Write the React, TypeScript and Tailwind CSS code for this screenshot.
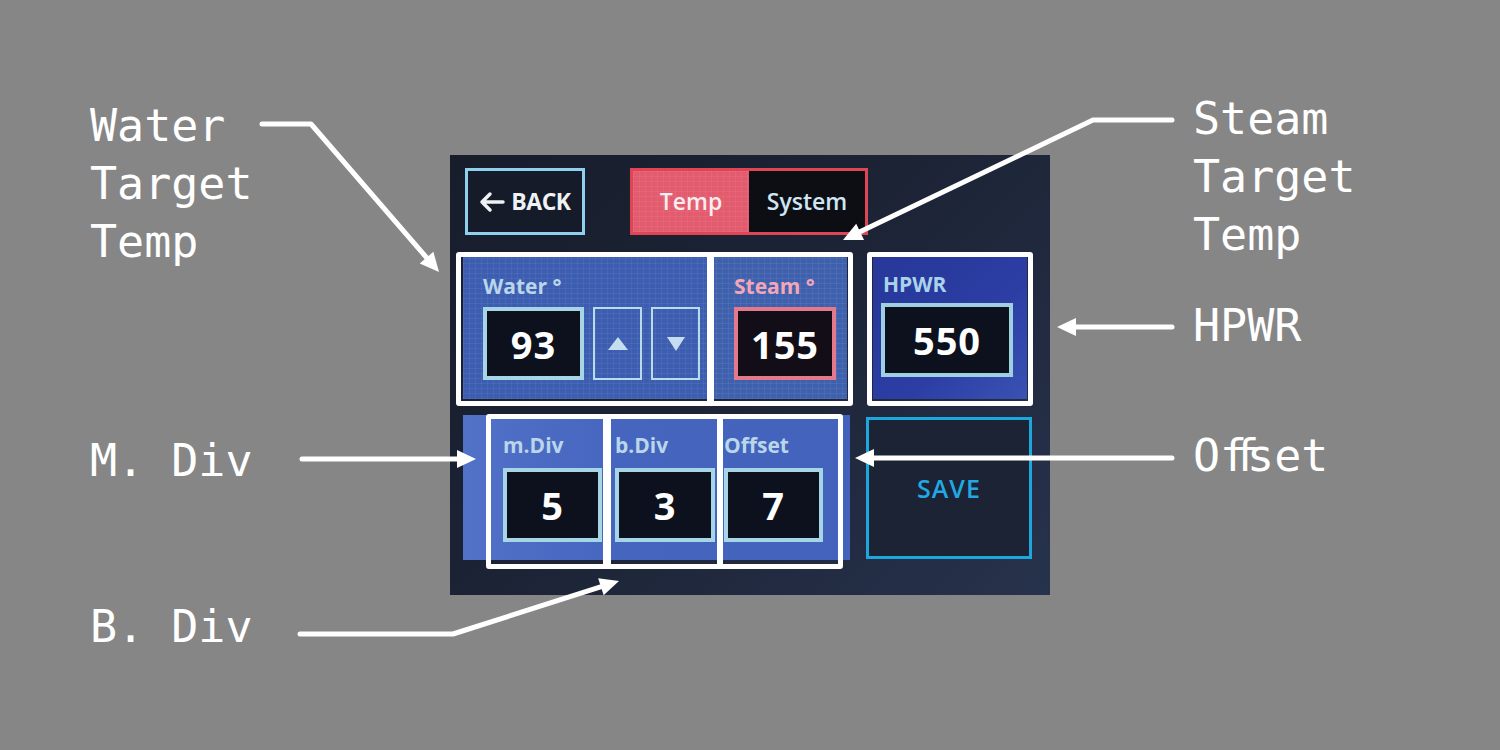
import React from "react";

type Pt = [number, number];

function Callout({ points }: { points: Pt[] }) {
  const n = points.length;
  const [tx, ty] = points[n - 1];
  const [px, py] = points[n - 2];
  const dx = tx - px;
  const dy = ty - py;
  const len = Math.hypot(dx, dy);
  const ux = dx / len;
  const uy = dy / len;
  const L = 19;
  const W = 9;
  const bx = tx - ux * L;
  const by = ty - uy * L;
  const lx = bx - uy * W;
  const ly = by + ux * W;
  const rx = bx + uy * W;
  const ry = by - ux * W;
  const linePts: Pt[] = [...points.slice(0, n - 1), [bx + ux * 3, by + uy * 3]];
  return (
    <g>
      <polyline
        points={linePts.map((p) => p.join(",")).join(" ")}
        fill="none"
        stroke="#ffffff"
        strokeWidth={5}
        strokeLinecap="round"
        strokeLinejoin="round"
      />
      <polygon points={`${tx},${ty} ${lx},${ly} ${rx},${ry}`} fill="#ffffff" />
    </g>
  );
}

function ValueBox({ value, className }: { value: string; className: string }) {
  return (
    <div
      className={`flex items-center justify-center bg-[#0d111d] text-white font-bold text-[38px] leading-none tracking-[1px] ${className}`}
    >
      {value}
    </div>
  );
}

function Label({ text, color }: { text: string; color: string }) {
  return <div className={`text-[21px] leading-[21px] font-bold ${color}`}>{text}</div>;
}

const grid =
  "bg-[repeating-linear-gradient(0deg,rgba(255,255,255,0.06)_0px,rgba(255,255,255,0.06)_1px,transparent_1px,transparent_5px),repeating-linear-gradient(90deg,rgba(255,255,255,0.05)_0px,rgba(255,255,255,0.05)_1px,transparent_1px,transparent_6px)]";

function Screen() {
  return (
    <div className="relative w-[600px] h-[440px] pt-[13px] pl-[13px] bg-[linear-gradient(135deg,#171d2b_0%,#1c2335_45%,#27324c_100%)] font-['Open_Sans',sans-serif]">
      {/* top bar */}
      <div className="flex items-start">
        <div className="ml-[2px] w-[120px] h-[67px] border-[3px] border-[#8fd0ee] bg-[#151b28] flex items-center justify-center gap-[6px]">
          <svg width="26" height="22" viewBox="0 0 26 22">
            <path
              d="M24 11H3M11 3L3 11l8 8"
              fill="none"
              stroke="#eef2f4"
              strokeWidth={3.5}
              strokeLinecap="round"
              strokeLinejoin="round"
            />
          </svg>
          <span className="text-[23px] font-bold text-[#eef2f4] tracking-[-0.5px] leading-none">BACK</span>
        </div>
        <div className="ml-[45px] w-[238px] h-[67px] border-[3px] border-[#e04555] flex">
          <div className={`w-[116px] h-full bg-[#e35b6e] ${grid} flex items-center justify-center`}>
            <span className="text-[23px] font-semibold text-[#f8ecef] leading-none">Temp</span>
          </div>
          <div className="flex-1 h-full bg-[#0d0e14] flex items-center justify-center">
            <span className="text-[23px] font-semibold text-[#cfe6f5] leading-none">System</span>
          </div>
        </div>
      </div>

      {/* row 2 */}
      <div className="mt-[22px] flex items-start">
        <div className="flex h-[142px]">
          <div className={`w-[247px] h-full bg-[#3c5db0] ${grid} pl-[20px] pt-[19px]`}>
            <Label text="Water °" color="text-[#b9d6ea]" />
            <div className="mt-[10px] flex gap-[9px]">
              <ValueBox value="93" className="w-[101px] h-[73px] border-[4px] border-[#a6d6e6]" />
              <div className="w-[49px] h-[73px] border-[2px] border-[#b8dcea] flex items-center justify-center">
                <svg width="20" height="13" viewBox="0 0 20 13">
                  <polygon points="10,0 20,13 0,13" fill="#c4def0" />
                </svg>
              </div>
              <div className="w-[49px] h-[73px] border-[2px] border-[#b8dcea] flex items-center justify-center">
                <svg width="18" height="14" viewBox="0 0 18 14">
                  <polygon points="0,0 18,0 9,14" fill="#c4def0" />
                </svg>
              </div>
            </div>
          </div>
          <div className={`w-[137px] h-full bg-[#3f61ad] ${grid} pl-[24px] pt-[19px]`}>
            <Label text="Steam °" color="text-[#f2a6b8]" />
            <div className="mt-[10px]">
              <ValueBox value="155" className="w-[102px] h-[73px] border-[4px] border-[#e3798a] bg-[#120d16]" />
            </div>
          </div>
        </div>
        <div className="ml-[26px] w-[154px] h-[142px] bg-[linear-gradient(135deg,#27379a_0%,#2c3ea4_60%,#3a52b4_100%)] pl-[10px] pt-[17px]">
          <Label text="HPWR" color="text-[#a9d3ea]" />
          <div className="mt-[8px] -ml-[2px]">
            <ValueBox value="550" className="w-[132px] h-[74px] border-[4px] border-[#9fd0e2]" />
          </div>
        </div>
      </div>

      {/* row 3 */}
      <div className="mt-[16px] flex items-start">
        <div className="w-[387px] h-[145px] bg-[linear-gradient(90deg,#5272c8_0%,#4565bf_40%,#4262bc_100%)] pl-[40px] pt-[20px] flex">
          <div className="w-[100px]">
            <Label text="m.Div" color="text-[#b9d6ea]" />
            <ValueBox value="5" className="mt-[12px] w-[99px] h-[74px] border-[4px] border-[#a6d6e6]" />
          </div>
          <div className="ml-[12px] w-[100px]">
            <Label text="b.Div" color="text-[#b9d6ea]" />
            <ValueBox value="3" className="mt-[12px] w-[100px] h-[74px] border-[4px] border-[#a6d6e6]" />
          </div>
          <div className="ml-[9px] w-[100px]">
            <Label text="Offset" color="text-[#b9d6ea]" />
            <ValueBox value="7" className="mt-[12px] w-[99px] h-[74px] border-[4px] border-[#a6d6e6]" />
          </div>
        </div>
        <div className="ml-[16px] mt-[2px] w-[166px] h-[142px] border-[3px] border-[#1ca8dc] bg-[#1b2334] flex items-center justify-center">
          <span className="text-[25px] font-semibold text-[#22a8e4] tracking-[1px] leading-none">SAVE</span>
        </div>
      </div>

      {/* annotation outlines */}
      <div className="absolute left-[6px] top-[97px] w-[397px] h-[154px] border-[5px] border-white rounded-[3px]" />
      <div className="absolute left-[257px] top-[97px] w-[7px] h-[154px] bg-white" />
      <div className="absolute left-[417px] top-[97px] w-[166px] h-[154px] border-[5px] border-white rounded-[3px]" />
      <div className="absolute left-[36px] top-[259px] w-[357px] h-[155px] border-[5px] border-white rounded-[3px]" />
      <div className="absolute left-[153px] top-[259px] w-[8px] h-[155px] bg-white" />
      <div className="absolute left-[267px] top-[259px] w-[6px] h-[155px] bg-white" />
    </div>
  );
}

export default function App() {
  const note =
    "absolute text-white text-[45px] leading-[58px] font-['DejaVu_Sans_Mono',monospace] whitespace-pre";
  return (
    <div className="relative w-[1500px] h-[750px] bg-[#868686] overflow-hidden flex items-center justify-center">
      <Screen />

      <div className={`${note} left-[90px] top-[97px]`}>{"Water\nTarget\nTemp"}</div>
      <div className={`${note} left-[1193px] top-[90px]`}>{"Steam\nTarget\nTemp"}</div>
      <div className={`${note} left-[1193px] top-[297px]`}>HPWR</div>
      <div className={`${note} left-[1193px] top-[427px]`}>
        O<span className="inline-block w-[27px]"><span className="tracking-[-15px]">ff</span></span>set
      </div>
      <div className={`${note} left-[90px] top-[432px]`}>M. Div</div>
      <div className={`${note} left-[90px] top-[598px]`}>B. Div</div>

      <svg className="absolute left-0 top-0 pointer-events-none" width="1500" height="750" viewBox="0 0 1500 750">
        <Callout points={[[262, 124], [311, 124], [439, 272]]} />
        <Callout points={[[1172, 120], [1093, 120], [843, 240]]} />
        <Callout points={[[1172, 327], [1057, 327]]} />
        <Callout points={[[1172, 458], [855, 458]]} />
        <Callout points={[[302, 459], [476, 459]]} />
        <Callout points={[[300, 634], [453, 634], [619, 581]]} />
      </svg>
    </div>
  );
}
